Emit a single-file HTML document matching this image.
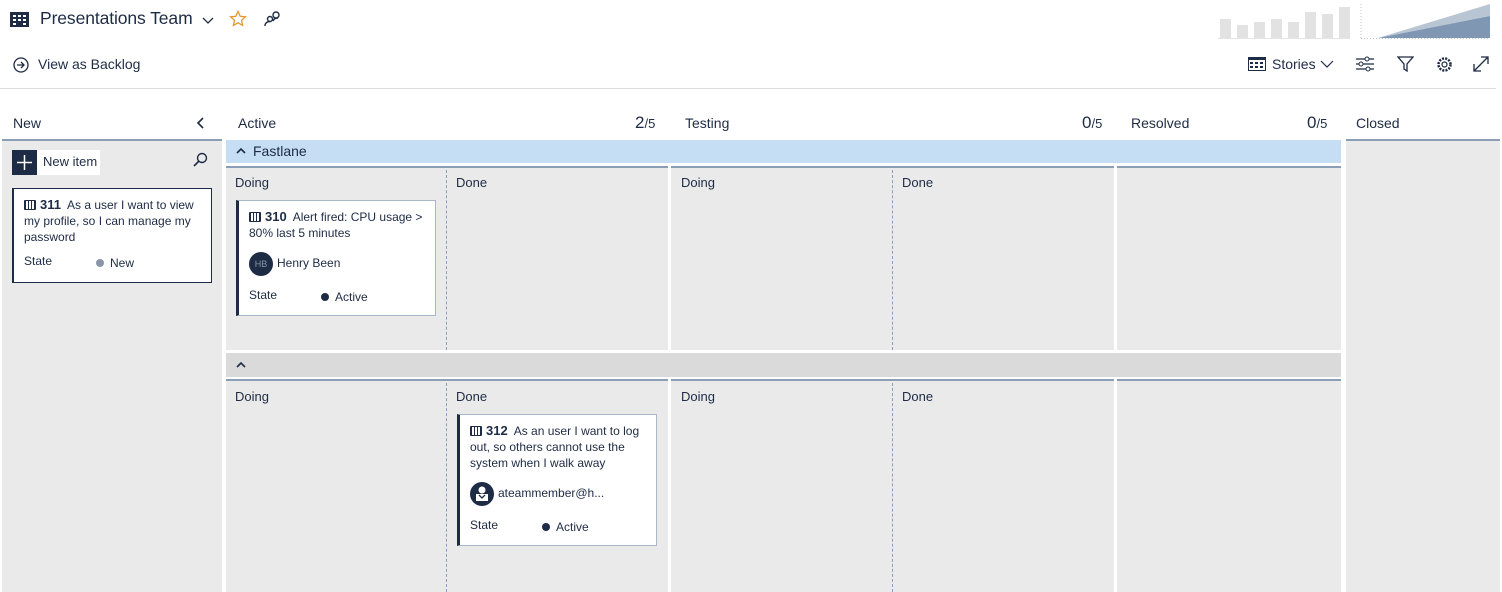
<!DOCTYPE html>
<html><head><meta charset="utf-8"><style>
*{margin:0;padding:0;box-sizing:border-box}
body{width:1502px;height:592px;overflow:hidden;background:#fff;font-family:"Segoe UI","Liberation Sans",sans-serif;color:#1e2b45;position:relative}
.a{position:absolute}
.t13{font-size:13px}
.bg{background:#eaeaea}
.bt{border-top:2px solid #8a9fb6}
.card{position:absolute;background:#fff;border:1px solid #a9b8c8;border-left:3px solid #1e2b45;font-size:12px;line-height:16px;padding:8px 10px 0 10px}
.card b{font-weight:bold;font-size:13px}
.bk{display:inline-block;width:12px;height:10px;border:1.5px solid #1e2b45;border-radius:1px;margin-right:4px;vertical-align:-1px;background:repeating-linear-gradient(90deg,#1e2b45 0 1px,#fff 1px 3px)}
.dot{display:inline-block;width:8px;height:8px;border-radius:50%;background:#1e2b45;margin-right:6px;vertical-align:0}
.dash{position:absolute;border-left:1px dashed #8aa0b8;width:0}
</style></head><body>
<svg class="a" style="left:10px;top:12px" width="19" height="15"><rect x="0" y="0" width="19" height="15" fill="#1e2b45"/><g fill="#fff"><rect x="3" y="3" width="3" height="2"/><rect x="8" y="3" width="3" height="2"/><rect x="13" y="3" width="3" height="2"/><rect x="3" y="7" width="3" height="2"/><rect x="8" y="7" width="3" height="2"/><rect x="13" y="7" width="3" height="2"/><rect x="3" y="11" width="3" height="2"/><rect x="13" y="11" width="3" height="2"/></g></svg>
<div class="a" style="left:40px;top:8px;font-size:17.5px;letter-spacing:-0.1px">Presentations Team</div>
<svg class="a" style="left:202px;top:17px" width="12" height="8"><path d="M1 1l5 5 5-5" fill="none" stroke="#1e2b45" stroke-width="1.3"/></svg>
<svg class="a" style="left:229px;top:10px" width="18" height="18"><path d="M9 1.5l2.2 4.8 5.2.5-3.9 3.5 1.1 5.1L9 12.8l-4.6 2.6 1.1-5.1L1.6 6.8l5.2-.5z" fill="none" stroke="#e8962a" stroke-width="1.3"/></svg>
<svg class="a" style="left:263px;top:11px" width="18" height="16"><circle cx="13" cy="4" r="3" fill="none" stroke="#1e2b45" stroke-width="1.4"/><circle cx="7" cy="8" r="2.5" fill="none" stroke="#1e2b45" stroke-width="1.4"/><path d="M2 15c0-3 2-4.5 5-4.5M10 10c1-2 2-3 5-3" fill="none" stroke="#1e2b45" stroke-width="1.4"/></svg>
<svg class="a" style="left:13px;top:57px" width="16" height="16"><circle cx="8" cy="8" r="7" fill="none" stroke="#1e2b45" stroke-width="1.3"/><path d="M4 8h7M8 5l3 3-3 3" fill="none" stroke="#1e2b45" stroke-width="1.3"/></svg>
<div class="a" style="left:38px;top:56px;font-size:14px">View as Backlog</div>
<svg class="a" style="left:1218px;top:4px" width="282" height="36">
<g fill="#e2e2e2"><rect x="2" y="15" width="11" height="19"/><rect x="19" y="21" width="11" height="13"/><rect x="36" y="18" width="11" height="16"/><rect x="53" y="15" width="11" height="19"/><rect x="70" y="18" width="11" height="16"/><rect x="87" y="8" width="11" height="26"/><rect x="104" y="10" width="11" height="24"/><rect x="121" y="3" width="11" height="31"/></g>
<line x1="0" y1="34.5" x2="132" y2="34.5" stroke="#e4e4e4"/>
<line x1="143" y1="0" x2="143" y2="34" stroke="#b9c6d6" stroke-dasharray="1 2"/>
<line x1="143" y1="34.5" x2="272" y2="34.5" stroke="#b9c6d6" stroke-dasharray="1 2"/>
<path d="M160 34L272 0V12z" fill="#b8c5d3"/><path d="M160 34L272 12V34z" fill="#7f97b3"/>
</svg>
<svg class="a" style="left:1248px;top:57px" width="18" height="14"><rect x=".5" y=".5" width="17" height="13" fill="none" stroke="#1e2b45"/><g fill="#1e2b45"><rect x="0" y="0" width="18" height="3"/><rect x="2" y="5" width="3" height="2"/><rect x="7" y="5" width="3" height="2"/><rect x="12" y="5" width="3" height="2"/><rect x="2" y="9" width="3" height="2"/><rect x="7" y="9" width="3" height="2"/><rect x="12" y="9" width="3" height="2"/></g></svg>
<div class="a" style="left:1272px;top:56px;font-size:14px">Stories</div>
<svg class="a" style="left:1320px;top:60px" width="14" height="8"><path d="M1 1l6 6 6-6" fill="none" stroke="#1e2b45" stroke-width="1.2"/></svg>
<svg class="a" style="left:1356px;top:56px" width="18" height="16"><path d="M0 3h18M0 8h18M0 13h18" stroke="#1e2b45" stroke-width="1.2"/><circle cx="11" cy="3" r="2" fill="#fff" stroke="#1e2b45"/><circle cx="5" cy="8" r="2" fill="#fff" stroke="#1e2b45"/><circle cx="12" cy="13" r="2" fill="#fff" stroke="#1e2b45"/></svg>
<svg class="a" style="left:1397px;top:56px" width="17" height="16"><path d="M1 1h15l-6 7v7l-3-2V8z" fill="none" stroke="#1e2b45" stroke-width="1.3"/></svg>
<svg class="a" style="left:1436px;top:56px" width="17" height="17"><circle cx="8.5" cy="8.5" r="2.5" fill="none" stroke="#1e2b45" stroke-width="1.2"/><circle cx="8.5" cy="8.5" r="6" fill="none" stroke="#1e2b45" stroke-width="2.5" stroke-dasharray="2 1.2"/></svg>
<svg class="a" style="left:1473px;top:56px" width="16" height="16"><path d="M1 15L15 1M8 1h7v7M1 8v7h7" fill="none" stroke="#1e2b45" stroke-width="1.3"/></svg>
<div class="a" style="left:0;top:88px;width:1496px;height:1px;background:#ddd"></div>
<div class="a t13" style="left:13px;top:115px;font-size:14px">New</div>
<svg class="a" style="left:197px;top:117px" width="8" height="12"><path d="M6 1L1 6l5 5" fill="none" stroke="#1e2b45" stroke-width="1.6"/></svg>
<div class="a" style="left:238px;top:115px;font-size:14px">Active</div>
<div class="a" style="left:635px;top:113px;font-size:17px">2<span style="font-size:13px">/5</span></div>
<div class="a" style="left:685px;top:115px;font-size:14px">Testing</div>
<div class="a" style="left:1082px;top:113px;font-size:17px">0<span style="font-size:13px">/5</span></div>
<div class="a" style="left:1131px;top:115px;font-size:14px">Resolved</div>
<div class="a" style="left:1307px;top:113px;font-size:17px">0<span style="font-size:13px">/5</span></div>
<div class="a" style="left:1356px;top:115px;font-size:14px">Closed</div>
<div class="a bg bt" style="left:2px;top:139px;width:220px;height:453px"></div>
<div class="a" style="left:12px;top:150px;width:88px;height:25px;background:#fff"></div>
<div class="a" style="left:12px;top:150px;width:25px;height:25px;background:#1e2b45"></div>
<svg class="a" style="left:17px;top:155px" width="15" height="15"><path d="M7.5 0v15M0 7.5h15" stroke="#fff" stroke-width="1.5"/></svg>
<div class="a" style="left:43px;top:154px;font-size:13px">New item</div>
<svg class="a" style="left:192px;top:152px" width="16" height="16"><circle cx="10" cy="6" r="4.5" fill="none" stroke="#1e2b45" stroke-width="1.4"/><path d="M7 9l-5 5" stroke="#1e2b45" stroke-width="1.6"/></svg>
<div class="card" style="left:12px;top:188px;width:200px;height:95px;border:1px solid #1e2b45;border-left:2px solid #1e2b45">
<span class="bk"></span><b>311</b>&nbsp; As a user I want to view my profile, so I can manage my password
<div style="margin-top:8px;position:relative;height:20px"><span>State</span><span style="position:absolute;left:72px;top:2px"><span class="dot" style="background:#8a96a8"></span>New</span></div></div>
<div class="a bg bt" style="left:1346px;top:139px;width:154px;height:453px"></div>
<div class="a" style="left:226px;top:140px;width:1115px;height:23px;background:#c6def3"></div>
<svg class="a" style="left:236px;top:147px" width="10" height="7"><path d="M1 6l4-4 4 4" fill="none" stroke="#1e2b45" stroke-width="1.6"/></svg>
<div class="a" style="left:253px;top:143px;font-size:14px">Fastlane</div>
<div class="a bg bt" style="left:226px;top:166px;width:442px;height:184px"></div>
<div class="a bg bt" style="left:671px;top:166px;width:443px;height:184px"></div>
<div class="a bg bt" style="left:1117px;top:166px;width:224px;height:184px"></div>
<div class="dash" style="left:446px;top:170px;height:180px"></div>
<div class="dash" style="left:892px;top:170px;height:180px"></div>
<div class="a t13" style="left:235px;top:175px">Doing</div>
<div class="a t13" style="left:456px;top:175px">Done</div>
<div class="a t13" style="left:681px;top:175px">Doing</div>
<div class="a t13" style="left:902px;top:175px">Done</div>
<div class="card" style="left:236px;top:200px;width:200px;height:116px">
<span class="bk"></span><b>310</b>&nbsp; Alert fired: CPU usage &gt; 80% last 5 minutes
<div style="margin-top:10px;height:26px;line-height:24px"><span style="display:inline-block;width:24px;height:24px;border-radius:50%;background:#1e2b45;color:#8a96a8;font-size:9px;text-align:center;vertical-align:middle;margin-right:4px">HB</span>Henry Been</div>
<div style="margin-top:10px;position:relative;height:20px"><span>State</span><span style="position:absolute;left:72px;top:2px"><span class="dot"></span>Active</span></div></div>
<div class="a" style="left:226px;top:353px;width:1115px;height:24px;background:#dadada"></div>
<svg class="a" style="left:236px;top:361px" width="10" height="7"><path d="M1 6l4-4 4 4" fill="none" stroke="#1e2b45" stroke-width="1.6"/></svg>
<div class="a bg bt" style="left:226px;top:379px;width:442px;height:213px"></div>
<div class="a bg bt" style="left:671px;top:379px;width:443px;height:213px"></div>
<div class="a bg bt" style="left:1117px;top:379px;width:224px;height:213px"></div>
<div class="dash" style="left:446px;top:383px;height:209px"></div>
<div class="dash" style="left:892px;top:383px;height:209px"></div>
<div class="a t13" style="left:235px;top:389px">Doing</div>
<div class="a t13" style="left:456px;top:389px">Done</div>
<div class="a t13" style="left:681px;top:389px">Doing</div>
<div class="a t13" style="left:902px;top:389px">Done</div>
<div class="card" style="left:457px;top:414px;width:200px;height:132px">
<span class="bk"></span><b>312</b>&nbsp; As an user I want to log out, so others cannot use the system when I walk away
<div style="margin-top:10px;height:26px;line-height:24px"><svg width="24" height="24" style="vertical-align:middle;margin-right:4px"><circle cx="12" cy="12" r="12" fill="#1e2b45"/><circle cx="12" cy="8" r="3.5" fill="#fff"/><path d="M6 12h12v7H6z" fill="#fff"/><path d="M9 13l3 3 3-3" fill="none" stroke="#1e2b45" stroke-width="1.3"/></svg>ateammember@h...</div>
<div style="margin-top:10px;position:relative;height:20px"><span>State</span><span style="position:absolute;left:72px;top:2px"><span class="dot"></span>Active</span></div></div>
</body></html>
